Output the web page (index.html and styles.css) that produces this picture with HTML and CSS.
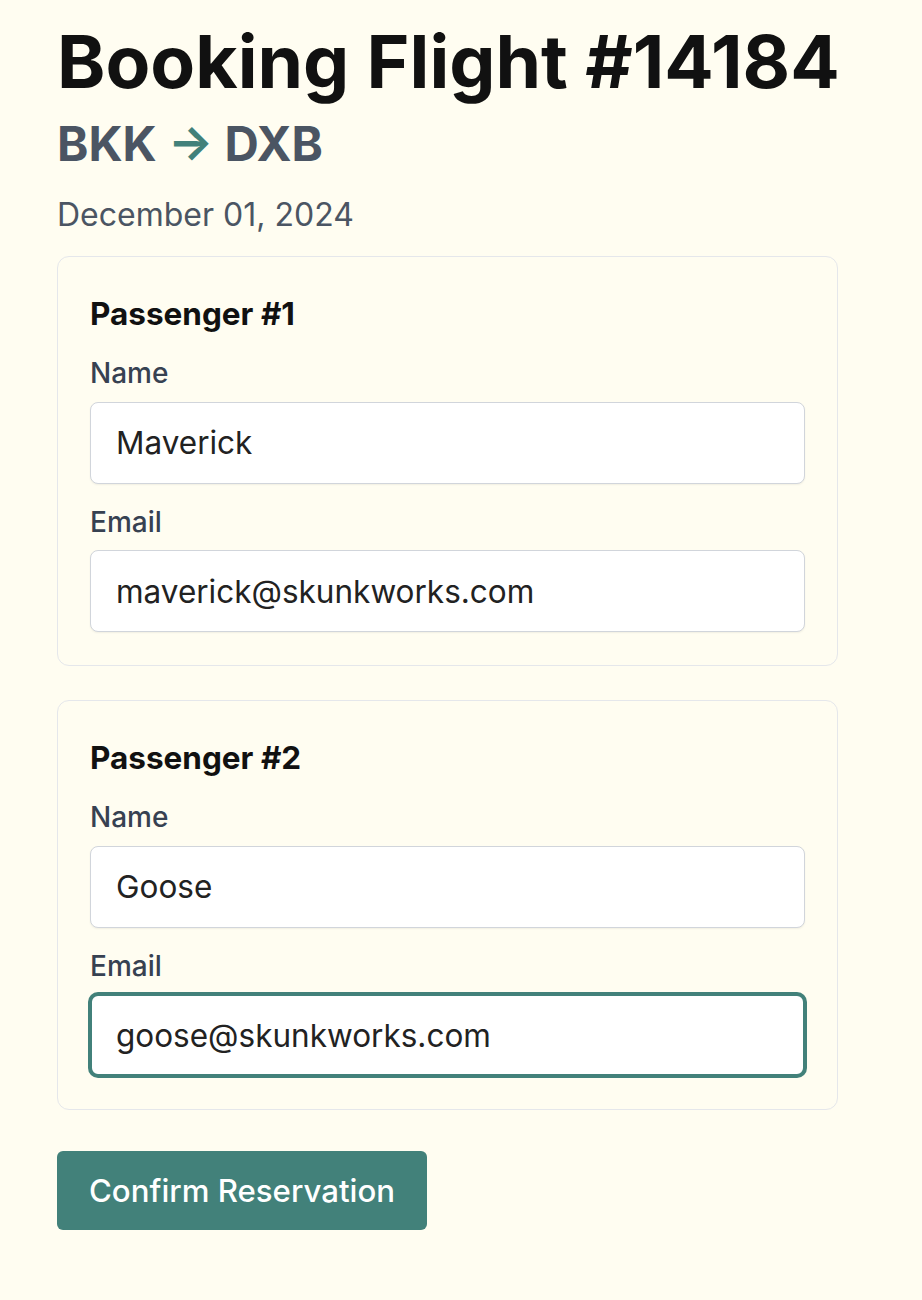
FILE: index.html
```html
<!DOCTYPE html>
<html lang="en">
<head>
<meta charset="utf-8">
<title>Booking Flight #14184</title>
<link rel="stylesheet" href="styles.css">
</head>
<body>
<main class="page">
  <h1 class="title">Booking Flight #14184</h1>
  <h2 class="route">BKK <span class="arrow">→</span> DXB</h2>
  <p class="date">December 01, 2024</p>
  <form class="form">
    <section class="card">
      <h3 class="card-title">Passenger #1</h3>
      <label class="field">
        <span class="label">Name</span>
        <input class="input" type="text" value="Maverick">
      </label>
      <label class="field">
        <span class="label">Email</span>
        <input class="input" type="email" value="maverick@skunkworks.com">
      </label>
    </section>
    <section class="card">
      <h3 class="card-title">Passenger #2</h3>
      <label class="field">
        <span class="label">Name</span>
        <input class="input" type="text" value="Goose">
      </label>
      <label class="field">
        <span class="label">Email</span>
        <input class="input input-focus" type="email" value="goose@skunkworks.com">
      </label>
    </section>
    <div class="actions">
      <button class="button" type="button">Confirm Reservation</button>
    </div>
  </form>
</main>
</body>
</html>
```
FILE: styles.css
```css
html, body {
  margin: 0;
  padding: 0;
  background: #fffdf1;
}
body {
  font-family: Inter, "Noto Sans", sans-serif;
  color: #111;
}
.page {
  width: 781px;
  padding: 22px 0 40px 57px;
}
.title {
  margin: 0;
  font-size: 73.2px;
  line-height: 80px;
  font-weight: 700;
  color: #111;
  white-space: nowrap;
}
.route {
  margin: 14px 0 0;
  font-size: 47.5px;
  line-height: 56px;
  font-weight: 700;
  color: #4b5563;
}
.arrow {
  color: #42817a;
}
.date {
  margin: 23px 0 21px;
  font-size: 32px;
  line-height: 40px;
  color: #4b5563;
}
.form {
  display: flex;
  flex-direction: column;
  gap: 34px;
}
.card {
  border: 1px solid #e5e7eb;
  border-radius: 12px;
  padding: 38px 32px 33px;
  display: flex;
  flex-direction: column;
  gap: 21px;
}
.card-title {
  margin: 0 0 2px;
  font-size: 31.5px;
  line-height: 38px;
  font-weight: 700;
  color: #111;
}
.field {
  display: flex;
  flex-direction: column;
  gap: 11.5px;
}
.label {
  font-size: 28px;
  line-height: 34px;
  font-weight: 500;
  color: #374151;
}
.input {
  box-sizing: border-box;
  height: 82px;
  width: 100%;
  padding: 0 25px;
  border: 1px solid #d1d5db;
  border-radius: 8px;
  background: #fff;
  box-shadow: 0 1px 2px rgba(0,0,0,0.06);
  font-family: inherit;
  font-size: 31.5px;
  color: #222;
  outline: none;
}
.input-focus {
  border: 2px solid #42817a;
  box-shadow: 0 0 0 2px #42817a;
  padding: 0 24px;
}
.actions {
  padding-top: 7px;
}
.button {
  height: 79px;
  padding: 0 32px;
  border: none;
  border-radius: 6px;
  background: #42817a;
  color: #fff;
  font-family: inherit;
  font-size: 31.2px;
  font-weight: 500;
}
```
